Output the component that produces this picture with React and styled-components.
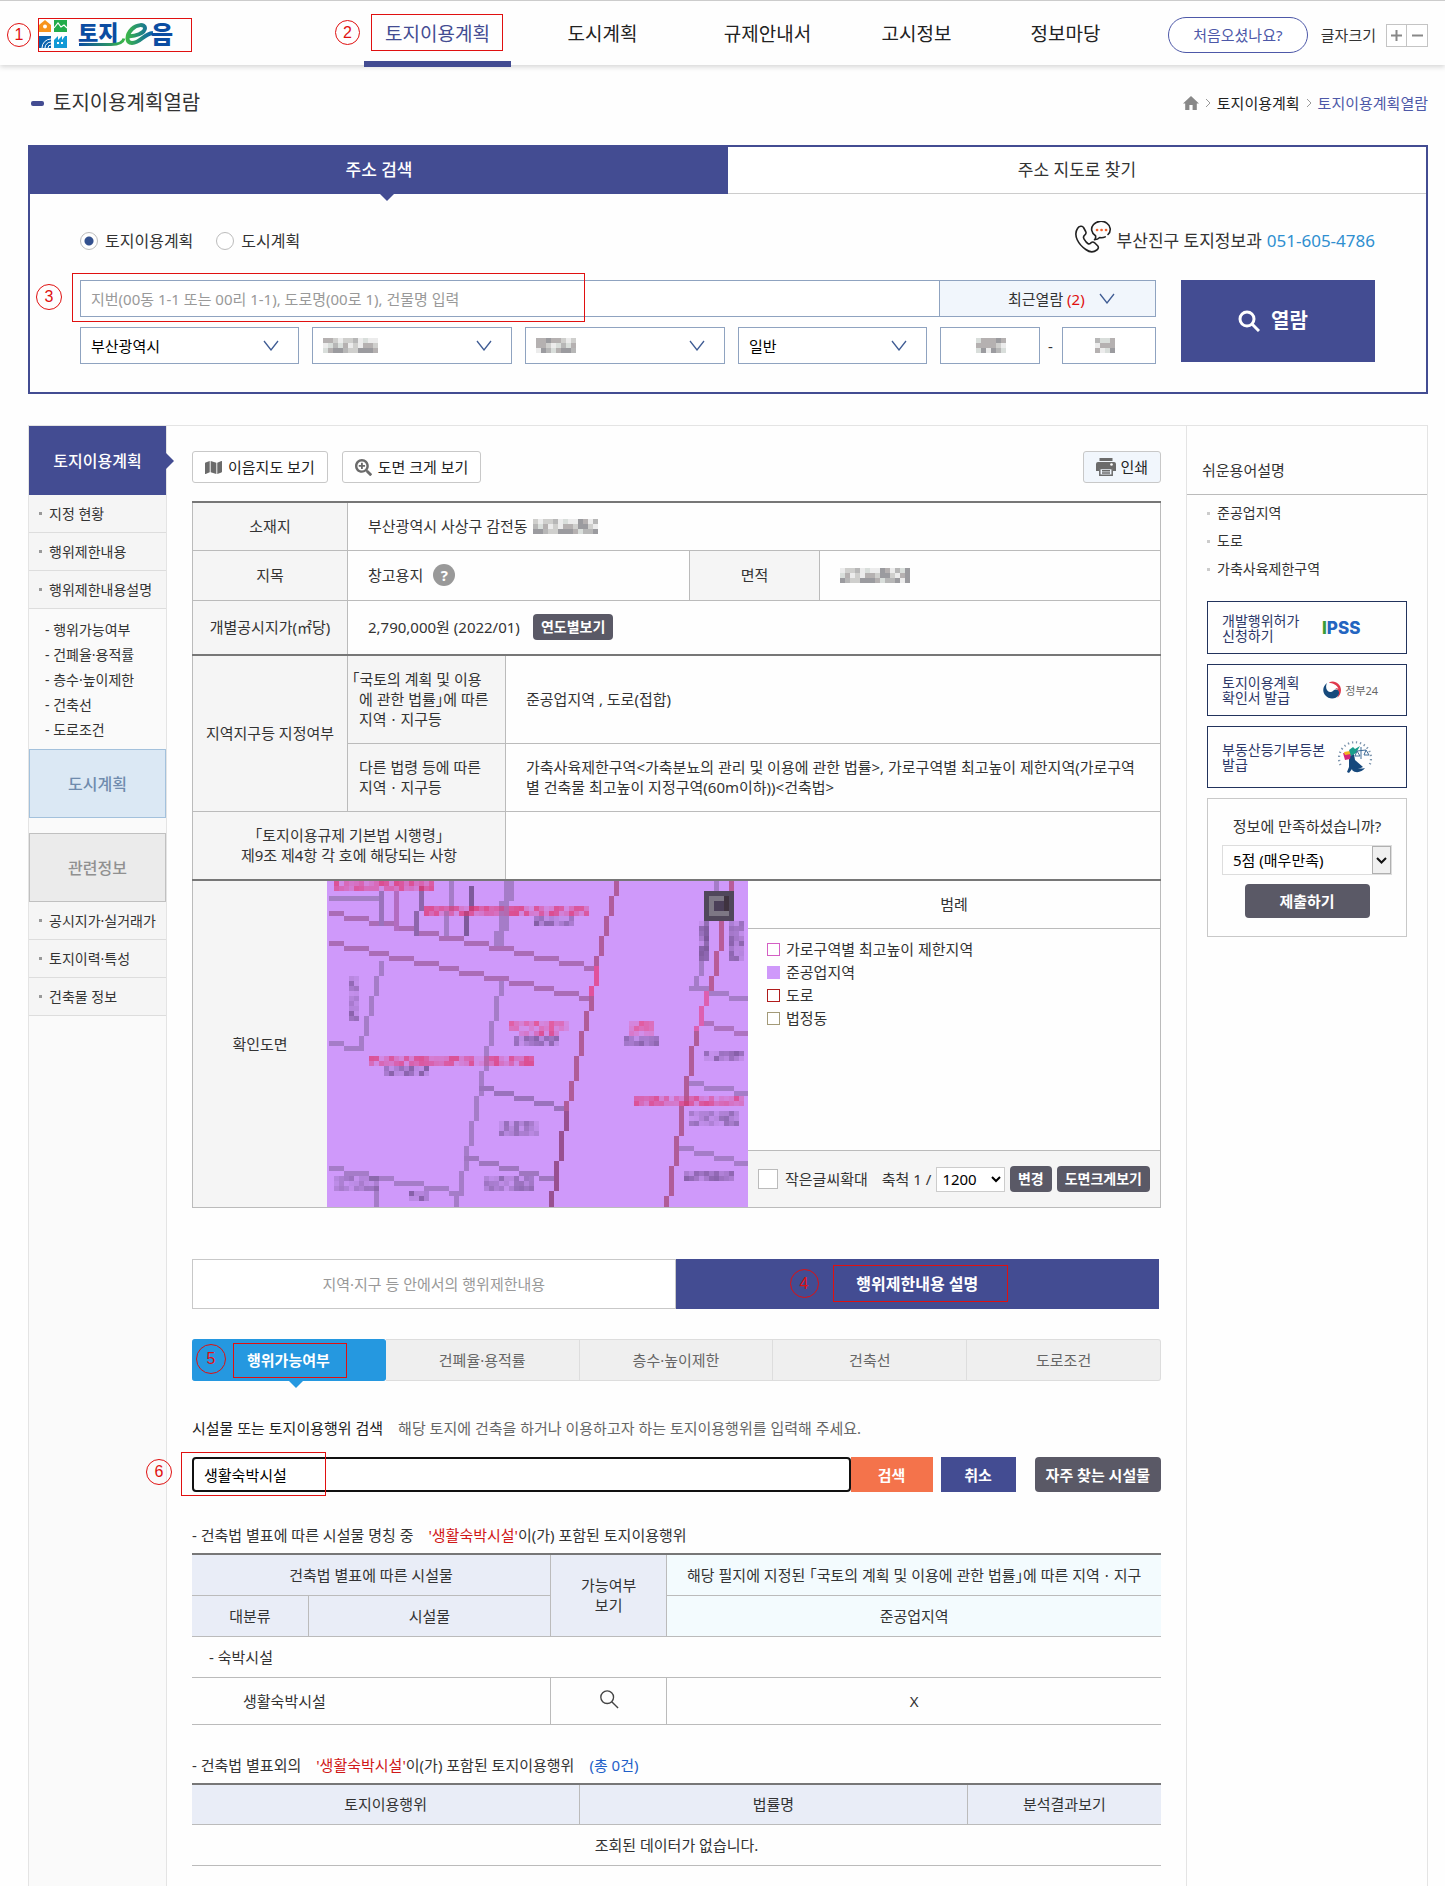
import React, { useState } from "react";
import styled, { createGlobalStyle, css } from "styled-components";
import { FaMap, FaSearchPlus } from "react-icons/fa";

const colors = {
    navy: "#434c92",
    link: "#4d58a8",
    text: "#333333",
    muted: "#999999",
    line: "#bbbbbb",
    lightLine: "#e4e4e4",
    strongLine: "#777777",
    headBg: "#f5f5f5",
    dark: "#5a5966",
    field: "#8fa3c0",
    red: "#e01010",
    sky: "#2598e0",
    orange: "#f4734b",
};

const fonts = {
    base: '"Noto Sans", "Noto Sans CJK KR", sans-serif',
    marker: '"Liberation Sans", sans-serif',
};

const GlobalStyle = createGlobalStyle`
    * {
        box-sizing: border-box;
    }
    body {
        margin: 0;
        background: #fefefe;
        color: ${colors.text};
        font-family: ${fonts.base};
        font-size: 15px;
        line-height: 20px;
    }
    button, input, select {
        font-family: inherit;
        font-size: 15px;
        line-height: 20px;
        margin: 0;
    }
    button {
        cursor: pointer;
    }
    a {
        color: inherit;
        text-decoration: none;
    }
    ul, h1, h2, h3, p {
        margin: 0;
        padding: 0;
        list-style: none;
        font-weight: 400;
    }
    svg {
        display: block;
    }
`;

/* numbered guide marks */

const MarkBox = styled.span`
    position: absolute;
    left: ${(p) => p.$box[0]}px;
    top: ${(p) => p.$box[1]}px;
    width: ${(p) => p.$box[2]}px;
    height: ${(p) => p.$box[3]}px;
    border: 1px solid ${colors.red};
    pointer-events: none;
    z-index: 2;
`;

const MarkBadge = styled.span`
    position: absolute;
    left: ${(p) => p.$at[0]}px;
    top: ${(p) => p.$at[1]}px;
    width: ${(p) => p.$size}px;
    height: ${(p) => p.$size}px;
    display: flex;
    align-items: center;
    justify-content: center;
    border: 1px solid ${colors.red};
    border-radius: 50%;
    color: ${colors.red};
    font-family: ${fonts.marker};
    font-size: 16px;
    font-weight: 400;
    pointer-events: none;
    z-index: 2;
`;

function Mark({ n, box, at, size = 26 }) {
    return (
        <>
            <MarkBox $box={box} />
            <MarkBadge $at={at} $size={size}>{n}</MarkBadge>
        </>
    );
}

/* mosaic drawing */

const noise = (x, y) => {
    const v = Math.sin(x * 12.9898 + y * 78.233) * 43758.5453;
    return v - Math.floor(v);
};

const greys = ["#9b9b9f", "#b7b7b7", "#cfcfcd", "#b5b1b1", "#d9dedb", "#ececec"];

function Mosaic({ cols, rows = 3, cell = 5 }) {
    const cells = [];
    for (let y = 0; y < rows; y++) {
        for (let x = 0; x < cols; x++) {
            const shade = greys[Math.floor(noise(x + cols, y + 1) * greys.length)];
            cells.push(<rect key={`${x}-${y}`} x={x * cell} y={y * cell} width={cell} height={cell} fill={shade} />);
        }
    }
    return (
        <svg width={cols * cell} height={rows * cell} shapeRendering="crispEdges" aria-hidden="true">
            {cells}
        </svg>
    );
}

const mapLines = [
    [0, 3, 9, 3, "#a57fc6"],
    [0, 6, 53, 17, "#aa6cb6"],
    [0, 12, 52, 23, "#aa6cb6"],
    [10, 2, 10, 8, "#9a72bc"],
    [13, 2, 13, 9, "#b26cc0"],
    [18, 1, 17, 10, "#8e66ac"],
    [24, 0, 23, 10, "#a57cc8"],
    [28, 1, 27, 10, "#7e5a9c"],
    [35, 0, 33, 12, "#a57cc8"],
    [36, 0, 34, 12, "#a57cc8"],
    [10, 16, 6, 33, "#a57cc8"],
    [0, 32, 6, 33, "#a57cc8"],
    [34, 20, 25, 65, "#a57cc8"],
    [30, 41, 47, 45, "#9a72bc"],
    [27, 55, 44, 59, "#9f76c0"],
    [0, 57, 26, 62, "#a57cc8"],
    [9, 61, 9, 65, "#a57cc8"],
    [77, 0, 73, 21, "#a57cc8"],
    [72, 21, 75, 21, "#a57cc8"],
    [76, 22, 83, 23, "#a57cc8"],
    [75, 28, 83, 30, "#ad72c0"],
    [72, 40, 83, 42, "#a57cc8"],
    [70, 53, 83, 56, "#a57cc8"],
    [57, 0, 53, 17, "#b05c9c"],
    [53, 17, 52, 23, "#e0529c"],
    [52, 23, 47, 46, "#b05c98"],
    [47, 46, 44, 65, "#985090"],
    [80, 0, 76, 21, "#b85c98"],
    [75, 22, 73, 30, "#dd5fb0"],
    [73, 30, 67, 65, "#b05c98"],
];

// x, y, columns, rows, colour
const mapLabels = [
    [1, 0, 20, 2, "#e0336c"],
    [19, 5, 33, 2, "#e0336c"],
    [36, 28, 12, 2, "#e8457e"],
    [38, 30, 8, 1, "#e0336c"],
    [60, 28, 5, 3, "#e8457e"],
    [8, 35, 33, 2, "#e0336c"],
    [61, 43, 22, 2, "#e0336c"],
    [41, 7, 8, 2, "#6c4c8a"],
    [37, 31, 9, 2, "#6c4c8a"],
    [59, 31, 7, 2, "#6c4c8a"],
    [11, 37, 9, 2, "#6c4c8a"],
    [75, 34, 8, 2, "#6c4c8a"],
    [72, 46, 10, 3, "#7c5c9c"],
    [34, 48, 8, 3, "#7c5c9c"],
    [31, 59, 10, 3, "#7c5c9c"],
    [71, 58, 10, 2, "#6c4c8a"],
    [1, 59, 9, 3, "#7c5c9c"],
    [16, 62, 4, 2, "#6c4c8a"],
    [4, 19, 2, 9, "#6c4c8a"],
    [74, 8, 2, 8, "#6c4c8a"],
    [80, 8, 3, 8, "#6c4c8a"],
];

function lineCells([x0, y0, x1, y1]) {
    const steps = Math.max(Math.abs(x1 - x0), Math.abs(y1 - y0), 1);
    return Array.from({ length: steps + 1 }, (_, i) => [
        Math.round(x0 + ((x1 - x0) * i) / steps),
        Math.round(y0 + ((y1 - y0) * i) / steps),
    ]);
}

function LandMap() {
    const px = (x) => 2 + x * 5;
    return (
        <svg width="421" height="326" viewBox="0 0 421 326" shapeRendering="crispEdges" role="img" aria-label="확인도면">
            <rect width="421" height="326" fill="#cf99fa" />
            {mapLines.map((line, n) =>
                lineCells(line).map(([x, y], i) => (
                    <rect key={`${n}-${i}`} x={px(x)} y={y * 5} width="5" height="5" fill={line[4]} />
                ))
            )}
            {mapLabels.map(([x, y, cols, rows, fill], n) =>
                Array.from({ length: cols * rows }, (_, i) => {
                    const cx = x + (i % cols);
                    const cy = y + Math.floor(i / cols);
                    return (
                        <rect
                            key={`${n}-${i}`}
                            x={px(cx)}
                            y={cy * 5}
                            width="5"
                            height="5"
                            fill={fill}
                            opacity={0.1 + noise(cx, cy) * 0.65}
                        />
                    );
                })
            )}
            <rect x={px(75)} y="10" width="30" height="30" fill="#50475a" />
            <rect x={px(76)} y="15" width="20" height="20" fill="#7d7784" />
            <rect x={px(77)} y="20" width="15" height="10" fill="#4b3f58" />
            <rect x={px(79)} y="15" width="5" height="15" fill="#3f333f" />
        </svg>
    );
}

/* icons */

const Chevron = () => (
    <svg width="16" height="11" viewBox="0 0 16 11" fill="none" stroke="#3f5c94" strokeWidth="1.3">
        <path d="M1 1l7 9 7-9" />
    </svg>
);

const SmallArrow = () => (
    <svg width="6" height="10" viewBox="0 0 6 10" fill="none" stroke="#999" strokeWidth="1">
        <path d="M1 1l4 4-4 4" />
    </svg>
);

const HomeIcon = () => (
    <svg width="16" height="14" viewBox="0 0 16 14" fill="#888">
        <path d="M8 0l8 7.5h-2.2V14H9.6V9H6.4v5H2.2V7.5H0z" />
    </svg>
);

const PhoneIcon = () => (
    <svg width="38" height="32" viewBox="0 0 38 32" fill="none" stroke="#222" strokeWidth="1.6" strokeLinejoin="round" strokeLinecap="round">
        <path d="M3.5 7.5C5 5 8.5 4.5 9.5 6.5l2.2 4c.8 1.6.3 2.6-1 3.6-1.7 1.3-1.6 2.3-.6 4 1 1.7 2.6 3.8 4 4.6 1.2.7 1.9 0 3-1 1.2-1 2.3-1 3.5.1l3 3c1.3 1.4.8 3-.8 4.2-3 2.3-7 2.5-11-.5C4.5 23.5-1 14.5 3.5 7.5z" />
        <path d="M21.5 14.8A9.3 8 0 1 1 34 13.5M21.5 14.8c.5 2-.1 3.2-1 4 2.5 0 4-.8 5.2-2.2 2 .3 4 0 5.5-.7" />
        <path d="M23 9h.1M27.5 9h.1M32 9h.1" stroke="#f0602c" strokeWidth="2.6" />
    </svg>
);

const SearchIcon = ({ size, stroke }) => (
    <svg width={size} height={size} viewBox="0 0 22 22" fill="none" stroke="currentColor" strokeWidth={stroke}>
        <circle cx="9" cy="9" r="7" />
        <path d="M14 14l7 7" />
    </svg>
);

const PrintIcon = () => (
    <svg width="20" height="18" viewBox="0 0 20 18">
        <path fill="#6b6b6b" d="M3.5 0h13v3h-13zM2 4h16a2 2 0 0 1 2 2v7h-3v-3H3v3H0V6a2 2 0 0 1 2-2z" />
        <circle cx="15.5" cy="6.5" r="1.3" fill="#fff" />
        <path fill="none" stroke="#6b6b6b" strokeWidth="1.5" d="M3.8 10.5h12.4v6.7H3.8zM6 12.8h8M6 15h8" />
    </svg>
);

const LogoArt = () => (
    <svg width="150" height="32" viewBox="0 0 150 32" overflow="visible" role="img" aria-label="토지이음">
        <defs>
            <linearGradient id="swoosh" x1="0" x2="1">
                <stop offset="0" stopColor="#0b4da2" />
                <stop offset="1" stopColor="#3bb54a" />
            </linearGradient>
            <linearGradient id="loop" x1="0" x2="1">
                <stop offset="0" stopColor="#3bb54a" />
                <stop offset="1" stopColor="#0b5fae" />
            </linearGradient>
        </defs>
        <path fill="#f7941d" d="M0 6l6-5 6 5v7H0z" />
        <circle cx="6" cy="7.5" r="2" fill="#fff" />
        <path fill="#22ac4b" d="M15 1h13v12H15z" />
        <path d="M15 9l4-5 3 4 3-2 3 3" fill="none" stroke="#fff" strokeWidth="1.2" />
        <path fill="#0b63ae" d="M0 17h12v12H0z" />
        <path d="M3 29a9 9 0 0 1 9-9M6 29a6 6 0 0 1 6-6M9 29a3 3 0 0 1 3-3" fill="none" stroke="#fff" strokeWidth="1" />
        <path fill="#139ad6" d="M15 29v-8l4-4v4l4-4v4l3-4h2v12z" />
        <path fill="#fff" d="M18 23h2v2h-2zM22 23h2v2h-2z" />
        <text x="39" y="22" fontSize="22" fontWeight="900" fill="#0b4da2">토지</text>
        <path d="M40 25.5h32c8 0 12-2 13-6" fill="none" stroke="url(#swoosh)" strokeWidth="3" />
        <path
            d="M88 17c8 1 18-3 18-8 0-4-8-4-13 1-6 6-6 14 0 14 9 0 11-9 21-10"
            fill="none"
            stroke="url(#loop)"
            strokeWidth="4"
        />
        <text x="112" y="24" fontSize="24" fontWeight="900" fill="#0b4da2">음</text>
    </svg>
);

const GovIcon = () => (
    <svg width="18" height="18" viewBox="0 0 18 18">
        <path fill="#e0384c" d="M6 1.5C11-1.5 18 2.5 18 9c0 3.5-1.7 6.3-4 7.8 2.5-4 2-8-1-9.3C10.5 6 8 4 6 1.5z" />
        <path fill="#174a7c" d="M4 2C0 5-1 10 2 14c4 5 11 4.5 13.5 0 1.5-3 0-6-3-5.5-2.5.5-3 3-5.5 2.5C3.5 10.5 2 6 4 2z" />
        <path fill="#fff" d="M5.5 1.8c-2 4 .5 6.5 3 6.2 3-.3 4.500-2 7 0C14 4 10 2 5.500 1.800z" />
    </svg>
);

const CourtIcon = () => (
    <svg width="36" height="36" viewBox="0 0 36 36">
        <path
            d="M3.500 26A16 16 0 1 1 32.500 26"
            fill="none"
            stroke="#7d95ad"
            strokeWidth="2.200"
            strokeDasharray="1.300 2.800"
        />
        <path fill="#16487c" d="M12 17l5-2 1 6 8 7c-4 2-8 3-11 2l-3 4-2-1 2-5z" />
        <path fill="#16487c" d="M16 27c4 3 8 3 12 2-3 4-9 6-13 2z" />
        <path fill="#d5267a" d="M6 14l8 1-1 5-5 1z" />
        <path fill="#f4b51f" d="M7 13l6-1 1 3-6 1z" />
        <path fill="#1a9d8c" d="M12 11l4-3 2 2 5-3-4 7-5 3z" />
        <path fill="none" stroke="#3f6c98" d="M20 12l9-1M24 8v12M20 12l-2 5h5zM29 11l-2 5h5z" />
    </svg>
);

/* header */

const Header = styled.header`
    position: relative;
    display: flex;
    align-items: stretch;
    height: 65px;
    padding: 0 17px 0 38px;
    border-top: 1px solid #cccccc;
    box-shadow: 0 2px 5px rgba(0, 0, 0, 0.16);
`;

const Logo = styled.a`
    position: relative;
    width: 154px;
    height: 34px;
    margin-top: 17px;
    padding: 1px;
`;

const Nav = styled.nav`
    display: grid;
    grid-template-columns: 147px 183px 147px 151px 147px;
    margin-left: 172px;
`;

const NavLink = styled.a`
    position: relative;
    display: flex;
    align-items: center;
    justify-content: center;
    padding-top: 2px;
    font-size: 19px;
    white-space: nowrap;
    color: ${(p) => (p.$active ? colors.navy : "#222222")};
    ${(p) =>
        p.$active &&
        css`
            &::after {
                content: "";
                position: absolute;
                left: 0;
                right: 0;
                bottom: -2px;
                height: 6px;
                background: ${colors.navy};
            }
        `}
`;

const Utils = styled.div`
    display: flex;
    align-items: center;
    margin-left: auto;
    padding-top: 4px;
`;

const HelpButton = styled.button`
    width: 140px;
    height: 36px;
    margin-right: 13px;
    border: 1px solid ${colors.link};
    border-radius: 18px;
    background: #ffffff;
    color: ${colors.link};
`;

const ZoomGroup = styled.div`
    display: flex;
    margin-left: 10px;
`;

const ZoomButton = styled.button`
    width: 21px;
    height: 23px;
    padding: 0;
    border: 1px solid #c4c4c4;
    background: #ffffff;
    display: flex;
    align-items: center;
    justify-content: center;
    & + & {
        border-left: 0;
    }
`;

const menus = ["토지이용계획", "도시계획", "규제안내서", "고시정보", "정보마당"];

const PageHeader = () => (
    <Header>
        <Logo href="#home">
            <LogoArt />
            <Mark n="1" box={[0, 0, 154, 34]} at={[-31, 5]} size={24} />
        </Logo>
        <Nav>
            {menus.map((menu, i) => (
                <NavLink key={menu} href="#menu" $active={i === 0}>
                    {menu}
                    {i === 0 && <Mark n="2" box={[7, 13, 132, 37]} at={[-29, 19]} size={25} />}
                </NavLink>
            ))}
        </Nav>
        <Utils>
            <HelpButton>처음오셨나요?</HelpButton>
            글자크기
            <ZoomGroup>
                <ZoomButton aria-label="글자 크게">
                    <svg width="11" height="11" stroke="#888" strokeWidth="2"><path d="M0 5.5h11M5.5 0v11" /></svg>
                </ZoomButton>
                <ZoomButton aria-label="글자 작게">
                    <svg width="11" height="11" stroke="#888" strokeWidth="2"><path d="M0 5.5h11" /></svg>
                </ZoomButton>
            </ZoomGroup>
        </Utils>
    </Header>
);

/* title */

const Wrap = styled.div`
    margin: 0 17px 0 28px;
`;

const TitleRow = styled.div`
    display: flex;
    align-items: center;
    justify-content: space-between;
    height: 80px;
    padding: 0 0 4px 3px;
`;

const Title = styled.h1`
    display: flex;
    align-items: center;
    font-size: 20px;
    &::before {
        content: "";
        width: 13px;
        height: 5px;
        margin-right: 9px;
        border-radius: 2px;
        background: ${colors.navy};
    }
`;

const Crumbs = styled.nav`
    display: flex;
    align-items: center;
    gap: 6px;
    color: #222222;
    a:last-child {
        color: ${colors.link};
    }
`;

/* search panel */

const Panel = styled.section`
    border: 2px solid ${colors.navy};
`;

const PanelTabs = styled.div`
    display: grid;
    grid-template-columns: 1fr 1fr;
`;

const PanelTab = styled.button`
    position: relative;
    height: 47px;
    border: 0;
    border-bottom: 1px solid ${(p) => (p.$active ? colors.navy : "#cccccc")};
    background: ${(p) => (p.$active ? colors.navy : "#ffffff")};
    color: ${(p) => (p.$active ? "#ffffff" : colors.text)};
    font-size: 17px;
    font-weight: ${(p) => (p.$active ? 500 : 400)};
    ${(p) =>
        p.$active &&
        css`
            &::after {
                content: "";
                position: absolute;
                left: 50%;
                top: 100%;
                border: 8px solid transparent;
                border-top-color: ${colors.navy};
                border-bottom: 0;
            }
        `}
`;

const PanelBody = styled.div`
    padding: 27px 51px 28px 50px;
`;

const PanelTop = styled.div`
    display: flex;
    align-items: center;
    height: 40px;
    margin-bottom: 19px;
    font-size: 16px;
`;

const RadioLabel = styled.label`
    display: flex;
    align-items: center;
    gap: 7px;
    margin-right: 23px;
`;

const Radio = styled.input`
    appearance: none;
    width: 18px;
    height: 18px;
    margin: 0;
    border: 1px solid #bcbcbc;
    border-radius: 50%;
    background: #ffffff;
    &:checked {
        background: radial-gradient(circle, #33518f 4px, #ffffff 5px);
    }
`;

const Contact = styled.p`
    display: flex;
    align-items: center;
    gap: 5px;
    margin-left: auto;
    font-size: 17px;
    svg {
        align-self: flex-start;
        margin-top: -8px;
    }
    a {
        color: #2f8fd0;
    }
`;

const SearchForm = styled.form`
    display: flex;
    align-items: flex-start;
    gap: 25px;
`;

const Fields = styled.div`
    position: relative;
    flex: 1;
    display: grid;
    gap: 10px;
`;

const KeywordRow = styled.div`
    display: flex;
`;

const fieldBox = css`
    height: 37px;
    border: 1px solid ${colors.field};
    border-radius: 0;
    background: #ffffff;
`;

const KeywordInput = styled.input`
    ${fieldBox}
    flex: 1;
    padding: 0 10px;
    &::placeholder {
        color: ${colors.muted};
        opacity: 1;
    }
`;

const RecentButton = styled.button`
    ${fieldBox}
    width: 216px;
    border-left: 0;
    padding: 0 40px 0 68px;
    display: flex;
    align-items: center;
    justify-content: space-between;
    background: #f1f6fc;
    color: ${colors.text};
    em {
        color: ${colors.red};
        font-style: normal;
    }
`;

const AddressRow = styled.div`
    display: grid;
    grid-template-columns: 219fr 200fr 200fr 189fr 216fr;
    gap: 13px;
`;

const SelectWrap = styled.div`
    position: relative;
`;

const FieldSelect = styled.select`
    ${fieldBox}
    appearance: none;
    width: 100%;
    padding: 0 10px;
    color: #000000;
`;

const SelectArrow = styled.span`
    position: absolute;
    right: 20px;
    top: 13px;
    pointer-events: none;
`;

const Covered = styled.span`
    position: absolute;
    left: ${(p) => (p.$center ? "50%" : "11px")};
    top: 11px;
    margin-left: ${(p) => (p.$center ? "-14px" : "0")};
    pointer-events: none;
`;

const LotRow = styled.div`
    display: grid;
    grid-template-columns: 99fr 22px 94fr;
    align-items: center;
    text-align: center;
`;

const LotInput = styled.input`
    ${fieldBox}
    width: 100%;
`;

const ViewButton = styled.button`
    display: flex;
    align-items: center;
    justify-content: center;
    gap: 11px;
    width: 194px;
    height: 82px;
    padding: 0 16px 0 6px;
    border: 0;
    background: ${colors.navy};
    color: #ffffff;
    font-size: 20px;
    font-weight: 700;
`;

function AddressSelect({ label, value, covered }) {
    return (
        <SelectWrap>
            <FieldSelect aria-label={label}>
                <option>{value}</option>
            </FieldSelect>
            {covered && <Covered><Mosaic cols={covered} /></Covered>}
            <SelectArrow><Chevron /></SelectArrow>
        </SelectWrap>
    );
}

function SearchPanel() {
    const [kind, setKind] = useState("토지이용계획");
    return (
        <Panel>
            <PanelTabs>
                <PanelTab $active>주소 검색</PanelTab>
                <PanelTab>주소 지도로 찾기</PanelTab>
            </PanelTabs>
            <PanelBody>
                <PanelTop>
                    {["토지이용계획", "도시계획"].map((name) => (
                        <RadioLabel key={name}>
                            <Radio type="radio" name="kind" checked={kind === name} onChange={() => setKind(name)} />
                            {name}
                        </RadioLabel>
                    ))}
                    <Contact>
                        <PhoneIcon />
                        부산진구 토지정보과 <a href="tel:051-605-4786">051-605-4786</a>
                    </Contact>
                </PanelTop>
                <SearchForm onSubmit={(e) => e.preventDefault()}>
                    <Fields>
                        <KeywordRow>
                            <KeywordInput
                                aria-label="주소 입력"
                                placeholder="지번(00동 1-1 또는 00리 1-1), 도로명(00로 1), 건물명 입력"
                            />
                            <RecentButton type="button">
                                <span>최근열람 <em>(2)</em></span>
                                <Chevron />
                            </RecentButton>
                        </KeywordRow>
                        <AddressRow>
                            <AddressSelect label="시도" value="부산광역시" />
                            <AddressSelect label="시군구" covered={11} />
                            <AddressSelect label="읍면동" covered={8} />
                            <AddressSelect label="구분" value="일반" />
                            <LotRow>
                                <SelectWrap>
                                    <LotInput aria-label="본번" />
                                    <Covered $center><Mosaic cols={6} /></Covered>
                                </SelectWrap>
                                -
                                <SelectWrap>
                                    <LotInput aria-label="부번" />
                                    <Covered $center><Mosaic cols={4} /></Covered>
                                </SelectWrap>
                            </LotRow>
                        </AddressRow>
                        <Mark n="3" box={[-8, -7, 513, 49]} at={[-44, 4]} size={26} />
                    </Fields>
                    <ViewButton>
                        <SearchIcon size={22} stroke={3} />
                        열람
                    </ViewButton>
                </SearchForm>
            </PanelBody>
        </Panel>
    );
}

/* side menu */

const Columns = styled.div`
    display: grid;
    grid-template-columns: 139px minmax(0, 1fr) 242px;
    margin-top: 31px;
    border-top: 1px solid ${colors.lightLine};
`;

const SideMenu = styled.aside`
    border: solid ${colors.lightLine};
    border-width: 0 1px;
    background: #fafafa;
    font-size: 14px;
`;

const sideTones = {
    navy: css`
        background: ${colors.navy};
        color: #ffffff;
        &::after {
            content: "";
            position: absolute;
            left: 100%;
            top: 27px;
            border: 8px solid transparent;
            border-left-color: ${colors.navy};
            border-right: 0;
        }
    `,
    blue: css`
        background: #dbe8f4;
        border: 1px solid #a3c1dc;
        color: #6f8bad;
    `,
    grey: css`
        margin-top: 15px;
        background: #ebebeb;
        border: 1px solid #c0c0c0;
        color: #909090;
    `,
};

const SideHead = styled.a`
    position: relative;
    display: flex;
    align-items: center;
    justify-content: center;
    height: 69px;
    font-size: 16px;
    font-weight: 500;
    ${(p) => sideTones[p.$tone]}
`;

const SideItem = styled.li`
    display: flex;
    align-items: center;
    height: 38px;
    padding-left: 10px;
    border-bottom: 1px solid #dddddd;
    background: ${colors.headBg};
    white-space: nowrap;
    &::before {
        content: "";
        width: 3px;
        height: 3px;
        margin-right: 7px;
        background: #999999;
    }
`;

const SubList = styled.ul`
    padding: 8px 0 7px 16px;
    line-height: 25px;
`;

const sideItems = ["지정 현황", "행위제한내용", "행위제한내용설명"];
const subItems = ["행위가능여부", "건폐율·용적률", "층수·높이제한", "건축선", "도로조건"];
const infoItems = ["공시지가·실거래가", "토지이력·특성", "건축물 정보"];

const Side = () => (
    <SideMenu>
        <SideHead href="#land" $tone="navy">토지이용계획</SideHead>
        <ul>
            {sideItems.map((item) => (
                <SideItem key={item}><a href="#item">{item}</a></SideItem>
            ))}
        </ul>
        <SubList>
            {subItems.map((item) => (
                <li key={item}><a href="#sub">- {item}</a></li>
            ))}
        </SubList>
        <SideHead href="#city" $tone="blue">도시계획</SideHead>
        <SideHead href="#info" $tone="grey">관련정보</SideHead>
        <ul>
            {infoItems.map((item) => (
                <SideItem key={item}><a href="#item">{item}</a></SideItem>
            ))}
        </ul>
    </SideMenu>
);

/* main column */

const Main = styled.main`
    padding: 25px 25px 20px;
`;

const Toolbar = styled.div`
    display: flex;
    gap: 14px;
    margin-bottom: 18px;
`;

const ToolButton = styled.button`
    display: flex;
    align-items: center;
    gap: ${(p) => (p.$end ? 4 : 6)}px;
    height: 32px;
    padding: 0 12px;
    border: 1px solid #c8c8c8;
    border-radius: 3px;
    background: ${(p) => (p.$end ? "#f1f6fc" : "#ffffff")};
    margin-left: ${(p) => (p.$end ? "auto" : "0")};
    color: #222222;
    svg {
        color: #6b6b6b;
    }
`;

const DarkButton = styled.button`
    height: ${(p) => p.$height || 26}px;
    padding: 0 ${(p) => (p.$height ? 11 : 8)}px;
    border: 0;
    border-radius: 4px;
    background: ${colors.dark};
    color: #ffffff;
    font-size: ${(p) => (p.$height ? 15 : 14)}px;
    font-weight: 700;
    white-space: nowrap;
`;

const InfoTable = styled.table`
    width: 100%;
    table-layout: fixed;
    border-collapse: collapse;
    border: 1px solid ${colors.line};
    border-top: 2px solid ${colors.strongLine};
    font-feature-settings: "halt";
    th,
    td {
        padding: 0 20px;
        border: 1px solid ${colors.line};
        font-weight: 400;
        text-align: left;
    }
    th {
        padding: 0 5px;
        background: ${colors.headBg};
        text-align: center;
    }
`;

const InfoRow = styled.tr`
    height: ${(p) => p.$height}px;
    ${(p) =>
        p.$strong &&
        css`
            th,
            td {
                border-bottom: 2px solid ${colors.strongLine};
            }
        `}
`;

const LawCell = styled.th`
    && {
        padding: 0 5px 0 11px;
        text-align: left;
        text-indent: ${(p) => (p.$hang ? "-7px" : "0")};
    }
`;

const Inline = styled.span`
    display: flex;
    align-items: center;
    gap: ${(p) => p.$gap}px;
`;

const HelpDot = styled.button`
    width: 22px;
    height: 22px;
    padding: 0;
    border: 0;
    border-radius: 50%;
    background: #999999;
    color: #ffffff;
    font-weight: 700;
`;

const MapRow = styled.section`
    display: grid;
    grid-template-columns: 134px 421px minmax(0, 1fr);
    border: 1px solid ${colors.line};
    border-top: 0;
`;

const MapLabel = styled.h3`
    display: flex;
    align-items: center;
    justify-content: center;
    background: ${colors.headBg};
    font-size: 15px;
`;

const Legend = styled.div`
    display: flex;
    flex-direction: column;
`;

const LegendTitle = styled.h3`
    padding: 13px 0 14px;
    border-bottom: 1px solid ${colors.line};
    font-size: 15px;
    text-align: center;
`;

const LegendList = styled.ul`
    flex: 1;
    padding: 9px 19px;
    line-height: 23px;
`;

const LegendItem = styled.li`
    display: flex;
    align-items: center;
    gap: 6px;
    &::before {
        content: "";
        width: 11px;
        height: 11px;
        border: 1px solid ${(p) => p.$color};
        background: ${(p) => (p.$filled ? p.$color : "#ffffff")};
    }
`;

const ScaleBar = styled.div`
    display: flex;
    align-items: center;
    gap: 5px;
    height: 57px;
    padding: 0 10px;
    border-top: 1px solid ${colors.line};
    background: ${colors.headBg};
    white-space: nowrap;
`;

const CheckLabel = styled.label`
    display: flex;
    align-items: center;
    gap: 7px;
    margin-right: 9px;
`;

const Check = styled.input`
    appearance: none;
    width: 20px;
    height: 20px;
    border: 1px solid ${colors.line};
    background: #ffffff;
`;

const ScaleSelect = styled.select`
    width: 70px;
    height: 25px;
    padding: 0 1px;
    border: 1px solid #cccccc;
    background: #ffffff;
    color: #000000;
`;

const legend = [
    { name: "가로구역별 최고높이 제한지역", color: "#d45fc4" },
    { name: "준공업지역", color: "#cf99fa", filled: true },
    { name: "도로", color: "#b01c1c" },
    { name: "법정동", color: "#a39a78" },
];

const LandInfo = () => (
    <>
        <InfoTable>
            <colgroup>
                <col width="155" />
                <col width="158" />
                <col width="184" />
                <col width="130" />
                <col />
            </colgroup>
            <tbody>
                <InfoRow $height={48}>
                    <th scope="row">소재지</th>
                    <td colSpan="4">
                        <Inline $gap={5}>부산광역시 사상구 감전동 <Mosaic cols={13} /></Inline>
                    </td>
                </InfoRow>
                <InfoRow $height={50}>
                    <th scope="row">지목</th>
                    <td colSpan="2">
                        <Inline $gap={10}>창고용지 <HelpDot aria-label="지목 도움말">?</HelpDot></Inline>
                    </td>
                    <th scope="row">면적</th>
                    <td><Mosaic cols={14} /></td>
                </InfoRow>
                <InfoRow $height={55} $strong>
                    <th scope="row">개별공시지가(㎡당)</th>
                    <td colSpan="4">
                        <Inline $gap={13}>2,790,000원 (2022/01) <DarkButton>연도별보기</DarkButton></Inline>
                    </td>
                </InfoRow>
                <InfoRow $height={88}>
                    <th scope="row" rowSpan="2">지역지구등 지정여부</th>
                    <LawCell scope="row" $hang>
                        「국토의 계획 및 이용<br />에 관한 법률」에 따른<br />지역ㆍ지구등
                    </LawCell>
                    <td colSpan="3">준공업지역 , 도로(접합)</td>
                </InfoRow>
                <InfoRow $height={68}>
                    <LawCell scope="row">다른 법령 등에 따른<br />지역ㆍ지구등</LawCell>
                    <td colSpan="3">
                        가축사육제한구역&lt;가축분뇨의 관리 및 이용에 관한 법률&gt;, 가로구역별 최고높이 제한지역(가로구역별 건축물
                        최고높이 지정구역(60m이하))&lt;건축법&gt;
                    </td>
                </InfoRow>
                <InfoRow $height={69} $strong>
                    <th scope="row" colSpan="2">「토지이용규제 기본법 시행령」<br />제9조 제4항 각 호에 해당되는 사항</th>
                    <td colSpan="3" />
                </InfoRow>
            </tbody>
        </InfoTable>
        <MapRow>
            <MapLabel>확인도면</MapLabel>
            <LandMap />
            <Legend>
                <LegendTitle>범례</LegendTitle>
                <LegendList>
                    {legend.map((item) => (
                        <LegendItem key={item.name} $color={item.color} $filled={item.filled}>{item.name}</LegendItem>
                    ))}
                </LegendList>
                <ScaleBar>
                    <CheckLabel><Check type="checkbox" />작은글씨확대</CheckLabel>
                    <label htmlFor="scale">축척 1 /</label>
                    <ScaleSelect id="scale">
                        <option>1200</option>
                    </ScaleSelect>
                    <DarkButton>변경</DarkButton>
                    <DarkButton>도면크게보기</DarkButton>
                </ScaleBar>
            </Legend>
        </MapRow>
    </>
);

const WideTabs = styled.div`
    display: grid;
    grid-template-columns: 1fr 1fr;
    margin: 51px 2px 30px 0;
`;

const WideTab = styled.button`
    position: relative;
    height: 50px;
    border: 1px solid ${(p) => (p.$active ? colors.navy : "#c8c8c8")};
    background: ${(p) => (p.$active ? colors.navy : "#ffffff")};
    color: ${(p) => (p.$active ? "#ffffff" : colors.muted)};
    font-size: ${(p) => (p.$active ? 16 : 15)}px;
    font-weight: ${(p) => (p.$active ? 700 : 400)};
`;

const SubTabs = styled.div`
    display: grid;
    grid-template-columns: repeat(5, 1fr);
    margin-bottom: 37px;
`;

const SubTab = styled.button`
    position: relative;
    height: 42px;
    border: 1px solid #dddddd;
    border-left-width: 0;
    background: #efefef;
    color: #666666;
    &:last-child {
        border-radius: 0 3px 3px 0;
    }
    ${(p) =>
        p.$active &&
        css`
            border-color: ${colors.sky};
            border-radius: 3px;
            background: ${colors.sky};
            color: #ffffff;
            font-weight: 700;
            &::after {
                content: "";
                position: absolute;
                left: 50%;
                top: 100%;
                border: 8px solid transparent;
                border-top-color: ${colors.sky};
                border-bottom: 0;
            }
        `}
`;

const SearchLabel = styled.label`
    display: block;
    margin-bottom: 19px;
    color: #222222;
    span {
        margin-left: 15px;
        color: #666666;
    }
`;

const UseForm = styled.form`
    position: relative;
    display: flex;
    height: 35px;
    margin-bottom: 33px;
`;

const UseInput = styled.input`
    flex: 1;
    padding: 0 10px;
    border: 2px solid #111111;
    border-radius: 4px;
    outline: 0;
    background: #ffffff;
    color: #000000;
`;

const FlatButton = styled.button`
    width: ${(p) => p.$width}px;
    margin-right: ${(p) => p.$after}px;
    border: 0;
    background: ${(p) => p.$bg};
    color: #ffffff;
    font-weight: 700;
`;

const ResultTitle = styled.h2`
    display: flex;
    gap: 15px;
    margin-bottom: 8px;
    font-size: 15px;
    em {
        color: #d01818;
        font-style: normal;
    }
    strong {
        color: #1f5fc8;
        font-weight: 400;
    }
`;

const ResultTable = styled.table`
    width: 100%;
    table-layout: fixed;
    border-collapse: collapse;
    border-top: 2px solid ${colors.strongLine};
    margin-bottom: ${(p) => p.$after}px;
    font-feature-settings: "halt";
    th,
    td {
        height: 41px;
        padding: 0;
        border: solid ${colors.line};
        border-width: 1px 0 1px 1px;
        font-weight: 400;
        text-align: center;
    }
    thead tr:first-child th {
        border-top: 2px solid ${colors.strongLine};
    }
    tr > :first-child {
        border-left: 0;
    }
`;

const HeadCell = styled.th`
    background: ${(p) => (p.$pale ? "#f3fbfe" : "#e9edf7")};
`;

const GroupCell = styled.td`
    && {
        padding-left: 17px;
        text-align: left;
    }
`;

const NameCell = styled.td`
    && {
        height: 47px;
        padding-left: 51px;
        text-align: left;
    }
`;

const IconButton = styled.button`
    padding: 0;
    border: 0;
    background: none;
    color: #444444;
`;

const subTabs = ["행위가능여부", "건폐율·용적률", "층수·높이제한", "건축선", "도로조건"];

const UseSearch = () => (
    <>
        <WideTabs>
            <WideTab>지역·지구 등 안에서의 행위제한내용</WideTab>
            <WideTab $active>
                행위제한내용 설명
                <Mark n="4" box={[156, 5, 175, 37]} at={[113, 9]} size={29} />
            </WideTab>
        </WideTabs>
        <SubTabs>
            {subTabs.map((tab, i) => (
                <SubTab key={tab} $active={i === 0}>
                    {tab}
                    {i === 0 && <Mark n="5" box={[41, 3, 114, 35]} at={[4, 4]} size={30} />}
                </SubTab>
            ))}
        </SubTabs>
        <SearchLabel htmlFor="use">
            시설물 또는 토지이용행위 검색
            <span>해당 토지에 건축을 하거나 이용하고자 하는 토지이용행위를 입력해 주세요.</span>
        </SearchLabel>
        <UseForm onSubmit={(e) => e.preventDefault()}>
            <UseInput id="use" defaultValue="생활숙박시설" />
            <FlatButton $width={82} $after={8} $bg={colors.orange}>검색</FlatButton>
            <FlatButton type="button" $width={75} $after={19} $bg={colors.navy}>취소</FlatButton>
            <DarkButton type="button" $height={35}>자주 찾는 시설물</DarkButton>
            <Mark n="6" box={[-11, -5, 145, 44]} at={[-46, 2]} size={26} />
        </UseForm>
        <ResultTitle>
            <span>- 건축법 별표에 따른 시설물 명칭 중</span>
            <span><em>'생활숙박시설'</em>이(가) 포함된 토지이용행위</span>
        </ResultTitle>
        <ResultTable $after={30}>
            <colgroup>
                <col width="12%" />
                <col width="25%" />
                <col width="12%" />
                <col width="51%" />
            </colgroup>
            <thead>
                <tr>
                    <HeadCell colSpan="2">건축법 별표에 따른 시설물</HeadCell>
                    <HeadCell rowSpan="2">가능여부<br />보기</HeadCell>
                    <HeadCell $pale>해당 필지에 지정된 「국토의 계획 및 이용에 관한 법률」에 따른 지역ㆍ지구</HeadCell>
                </tr>
                <tr>
                    <HeadCell>대분류</HeadCell>
                    <HeadCell>시설물</HeadCell>
                    <HeadCell $pale>준공업지역</HeadCell>
                </tr>
            </thead>
            <tbody>
                <tr>
                    <GroupCell colSpan="4">- 숙박시설</GroupCell>
                </tr>
                <tr>
                    <NameCell colSpan="2">생활숙박시설</NameCell>
                    <td>
                        <IconButton aria-label="가능여부 보기"><SearchIcon size={20} stroke={1.5} /></IconButton>
                    </td>
                    <td>X</td>
                </tr>
            </tbody>
        </ResultTable>
        <ResultTitle>
            <span>- 건축법 별표외의</span>
            <span><em>'생활숙박시설'</em>이(가) 포함된 토지이용행위</span>
            <strong>(총 0건)</strong>
        </ResultTitle>
        <ResultTable $after={0}>
            <colgroup>
                <col width="40%" />
                <col width="40%" />
                <col width="20%" />
            </colgroup>
            <thead>
                <tr>
                    <HeadCell>토지이용행위</HeadCell>
                    <HeadCell>법률명</HeadCell>
                    <HeadCell>분석결과보기</HeadCell>
                </tr>
            </thead>
            <tbody>
                <tr>
                    <td colSpan="3">조회된 데이터가 없습니다.</td>
                </tr>
            </tbody>
        </ResultTable>
    </>
);

/* right column */

const Aside = styled.aside`
    border: solid ${colors.lightLine};
    border-width: 0 1px;
`;

const AsideTitle = styled.h2`
    padding: 34px 15px 14px;
    border-bottom: 1px solid ${colors.line};
    font-size: 15px;
`;

const TermList = styled.ul`
    padding: 4px 20px 18px;
    font-size: 14px;
    line-height: 28px;
    li {
        display: flex;
        align-items: center;
    }
    li::before {
        content: "";
        width: 3px;
        height: 3px;
        margin-right: 7px;
        background: #cccccc;
    }
`;

const Banner = styled.a`
    display: flex;
    align-items: center;
    gap: ${(p) => p.$gap}px;
    height: ${(p) => p.$height}px;
    margin: 0 20px 10px;
    padding-left: 14px;
    border: 1px solid #22335c;
    color: #2c3768;
    font-size: 14px;
    line-height: 15px;
`;

const GovMark = styled.span`
    display: flex;
    align-items: center;
    gap: 4px;
    color: #666666;
    font-size: 11px;
`;

const Survey = styled.form`
    display: flex;
    flex-direction: column;
    align-items: center;
    gap: 9px;
    margin: 0 20px;
    padding: 17px 14px 18px;
    border: 1px solid #c8c8c8;
`;

const SurveySelectWrap = styled.div`
    position: relative;
    width: 100%;
`;

const SurveySelect = styled.select`
    appearance: none;
    width: 100%;
    height: 30px;
    padding: 0 10px;
    border: 1px solid #dddddd;
    border-radius: 0;
    background: #ffffff;
    color: #000000;
`;

const SurveyArrow = styled.span`
    position: absolute;
    right: 1px;
    top: 1px;
    bottom: 1px;
    width: 19px;
    display: flex;
    align-items: center;
    justify-content: center;
    border: 1px solid #b0b0b0;
    background: #f0f0f0;
    pointer-events: none;
`;

const SubmitButton = styled(DarkButton)`
    width: 125px;
`;

const Right = () => (
    <Aside>
        <AsideTitle>쉬운용어설명</AsideTitle>
        <TermList>
            {["준공업지역", "도로", "가축사육제한구역"].map((term) => (
                <li key={term}><a href="#term">{term}</a></li>
            ))}
        </TermList>
        <Banner href="#ipss" $height={53} $gap={23}>
            <span>개발행위허가<br />신청하기</span>
            <svg width="42" height="18" fontFamily="Inter" fontSize="17" fontWeight="800">
                <text x="0" y="15" fill="#3a9b35">I<tspan fill="#2465c0">PSS</tspan></text>
            </svg>
        </Banner>
        <Banner href="#gov24" $height={52} $gap={24}>
            <span>토지이용계획<br />확인서 발급</span>
            <GovMark><GovIcon />정부24</GovMark>
        </Banner>
        <Banner href="#court" $height={62} $gap={12}>
            <span>부동산등기부등본<br />발급</span>
            <CourtIcon />
        </Banner>
        <Survey onSubmit={(e) => e.preventDefault()}>
            <label htmlFor="score">정보에 만족하셨습니까?</label>
            <SurveySelectWrap>
                <SurveySelect id="score">
                    <option>5점 (매우만족)</option>
                </SurveySelect>
                <SurveyArrow>
                    <svg width="11" height="7" fill="none" stroke="#111" strokeWidth="2"><path d="M1 1l4.5 4.5L10 1" /></svg>
                </SurveyArrow>
            </SurveySelectWrap>
            <SubmitButton $height={34}>제출하기</SubmitButton>
        </Survey>
    </Aside>
);

export default function App() {
    return (
        <>
            <GlobalStyle />
            <PageHeader />
            <Wrap>
                <TitleRow>
                    <Title>토지이용계획열람</Title>
                    <Crumbs>
                        <a href="#home" aria-label="홈"><HomeIcon /></a>
                        <SmallArrow />
                        <a href="#menu">토지이용계획</a>
                        <SmallArrow />
                        <a href="#page">토지이용계획열람</a>
                    </Crumbs>
                </TitleRow>
                <SearchPanel />
                <Columns>
                    <Side />
                    <Main>
                        <Toolbar>
                            <ToolButton><FaMap size={17} />이음지도 보기</ToolButton>
                            <ToolButton><FaSearchPlus size={17} />도면 크게 보기</ToolButton>
                            <ToolButton $end><PrintIcon />인쇄</ToolButton>
                        </Toolbar>
                        <LandInfo />
                        <UseSearch />
                    </Main>
                    <Right />
                </Columns>
            </Wrap>
        </>
    );
}
